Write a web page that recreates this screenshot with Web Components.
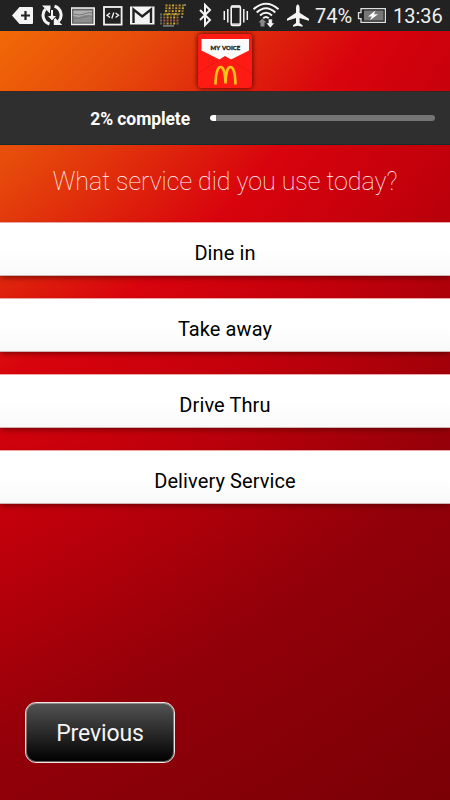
<!DOCTYPE html>
<html lang="en">
<head>
<meta charset="utf-8">
<title>My Voice</title>
<style>
  html, body {
    margin: 0;
    height: 100%;
  }

  body {
    font-family: Roboto, "Liberation Sans", sans-serif;
    overflow: hidden;
  }
</style>
</head>
<body>
<survey-app></survey-app>

<script>
// every icon is drawn in a box 30px high, one unit per pixel
const ICONS = {
  tag: [22, '<path fill="#f4f4f4" d="M0 15.500 7.500 7H20a1 1 0 0 1 1 1v15a1 1 0 0 1-1 1H7.500z"/><path stroke="#222" stroke-width="2.200" d="M9 15.500h9M13.500 11v9"/>'],
  sync: [23, '<g fill="none" stroke="#f4f4f4" stroke-width="3"><path d="M8.500 24A9.200 9.200 0 0 1 4.500 9M13.500 6.300A9.200 9.200 0 0 1 17.500 21.500"/></g><path fill="#f4f4f4" d="M1 5.500h8.500V14zM21.300 25h-8.500v-8.500z"/><path fill="#f4f4f4" stroke="#222" stroke-width="1" d="M9.500 9.500h3v6h3.500L11 21l-5-5.500h3.500z"/>'],
  screen: [24, '<rect x=".200" y="8" width="23" height="16.500" fill="#666" stroke="#f4f4f4" stroke-width="1.500"/><rect x="2.500" y="10" width="18.500" height="12.500" fill="#8d8d8d"/><path d="M2.500 11h18.500v5l-7-1-6 2-5.500-1z" fill="#b0b0b0"/><path fill="none" stroke="#777" d="M3 14q6 2 10 0t8-1M3 18q6 1 10-1t8-1"/>'],
  code: [20, '<rect x="1" y="7" width="17.600" height="17.600" fill="#222" stroke="#f4f4f4" stroke-width="1.800"/><path fill="none" stroke="#f4f4f4" stroke-width="1.300" d="m7 13-3 2.300 3 2.300M12.600 13l3 2.300-3 2.300M10.800 12.500l-2 6"/>'],
  mail: [25, '<path fill="#f4f4f4" d="M0 6.500h24.500v18H0z"/><path fill="none" stroke="#222" stroke-width="2.400" d="M3.500 23V9.500l8.700 7L21 9.500V23"/><path fill="#f4f4f4" d="M4 7h16.500l-8.300 7z"/>'],
  keys: [27, keyDots()],
  bluetooth: [14, '<path fill="none" stroke="#f4f4f4" stroke-width="2" d="m1 10 10 10-5 5V5l5 5L1 20"/>'],
  vibrate: [26, '<rect x="8.200" y="6" width="9.200" height="19.500" rx="1.500" fill="none" stroke="#f4f4f4" stroke-width="1.600"/><path stroke="#f4f4f4" stroke-width="2.400" d="M8.500 6.800h8.600M8.500 24.500h8.600" opacity=".8"/><path stroke="#f4f4f4" stroke-width="1.500" d="M4.800 9v13.500M20.800 9v13.500M1.300 11v9M24.300 11v9"/>'],
  wifi: [27, '<g fill="none" stroke="#f4f4f4" stroke-width="2"><path d="M.5 9.300q12.500-11 25 0M3.700 12.500q9.300-8.500 18.600 0M7 15.500q6-5.600 12 0"/><path d="M10.200 18.200q2.800-2.500 5.600 0"/></g><path fill="#888" d="M9.300 18.500 5.500 22.500h2v4h4v-4h2z"/><path fill="#f4f4f4" stroke="#222" stroke-width=".6" d="m17.300 28-4.300-5h2.300v-4h4v4h2.300z"/>'],
  plane: [23, '<path fill="#f4f4f4" d="M10.800 4.500c1.200 0 1.800 2 1.800 4v4.300l9.400 6v2l-9.400-2.800v5l3 2.200v1.600l-4.800-1-4.800 1v-1.600l3-2.200v-5L0 20.800v-2l9-6V8.500c0-2 .6-4 1.800-4z"/>'],
  battery: [29, '<path fill="none" stroke="#dedede" stroke-width="1.300" d="M4 8.600h24.400v13.800H4v-3.700H1.500v-6H4z"/><path fill="#777" d="M7 10.500h19.500v10H7z"/><path fill="#fff" d="m18.500 10.500-7.500 6h3.800L13 20.300l8-6h-4z"/>']
};

function keyDots() {
  const colors = ['#c99b26', '#a9832a', '#d8ae34', '#8b6d31'];
  let out = '';
  for (let row = 0; row < 4; row++) {
    for (let col = 0; col < 6; col++) {
      out += `<rect x="${5.500 + col * 3.3 - row * .2}" y="${4.500 + row * 2.800}" width="2" height="1.900" fill="${colors[(row + col) % 4]}"/>`;
    }
  }
  for (let row = 0; row < 4; row++) {
    for (let col = 0; col < 6; col++) {
      const fill = col === 0 ? '#686868' : row === 2 ? '#b0574d' : colors[(row * 2 + col) % 4];
      out += `<rect x="${col * 3.3}" y="${13.500 + row * 3}" width="2" height="2" fill="${fill}"/>`;
    }
  }
  return out + '<path fill="#777" d="M24 4h2v2h-2zM21 16h2v2h-2zM3 25h11v1.800H3z"/>';
}

class StatusIcon extends HTMLElement {
  constructor() {
    super();
    this.attachShadow({ mode: 'open' });
  }

  connectedCallback() {
    const [width, shapes] = ICONS[this.getAttribute('name')];
    this.shadowRoot.innerHTML = `
      <style>
        :host {
          display: block;
          height: 30px;
        }

        svg {
          display: block;
        }
      </style>
      <svg width="${width}" height="30" viewBox="0 0 ${width} 30">${shapes}</svg>
    `;
  }
}

class StatusBar extends HTMLElement {
  constructor() {
    super();
    this.attachShadow({ mode: 'open' });
    this.shadowRoot.innerHTML = `
      <style>
        :host {
          display: grid;
          grid-template-columns: 29px 30px 32px 27px 30px 39px 24px 30px 34px 28px 42px 36px 50px;
          height: 31px;
          box-sizing: border-box;
          padding-left: 12px;
          background: #222;
          border-bottom: 1px solid #1d2426;
          color: #f0f0f0;
          font-size: 20px;
          line-height: 33px;
          white-space: nowrap;
        }
      </style>
      <status-icon name="tag"></status-icon>
      <status-icon name="sync"></status-icon>
      <status-icon name="screen"></status-icon>
      <status-icon name="code"></status-icon>
      <status-icon name="mail"></status-icon>
      <status-icon name="keys"></status-icon>
      <status-icon name="bluetooth"></status-icon>
      <status-icon name="vibrate"></status-icon>
      <status-icon name="wifi"></status-icon>
      <status-icon name="plane"></status-icon>
      <span>74%</span>
      <status-icon name="battery"></status-icon>
      <span>13:36</span>
    `;
  }
}

class BrandHeader extends HTMLElement {
  constructor() {
    super();
    this.attachShadow({ mode: 'open' });
    this.shadowRoot.innerHTML = `
      <style>
        :host {
          display: flex;
          justify-content: center;
          height: 60px;
          box-sizing: border-box;
          padding-top: 3px;
        }

        svg {
          display: block;
          width: 54px;
          height: 54px;
          border-radius: 4px;
          box-shadow: 0 0 4px 1px rgba(70, 0, 0, 0.75);
        }

        text {
          font: 900 6px Lato, sans-serif;
          word-spacing: 1px;
        }
      </style>
      <svg viewBox="0 0 54 54">
        <path fill="#fd1b14" d="M0 0h54v54H0z"/>
        <path fill="none" stroke="#df1712" stroke-width=".7" d="M0 39.500 27 22l27 17.500"/>
        <path fill="#fafafa" d="M3.500 5h47.500v11.500L33 25.500l-6-3.500-5.500 3.500-18-9z"/>
        <text x="27.300" y="16.300" text-anchor="middle" fill="#252416" stroke="#252416" stroke-width=".3">MY VOICE</text>
        <path fill="none" stroke="#ffc414" stroke-width="2.600" d="M17.500 50.500C17.700 40 19.500 33 22.500 33S27.400 40 27.500 49.500C27.600 40 29.500 33 32.500 33S37.300 40 37.500 50.500"/>
      </svg>
    `;
  }
}

class SurveyProgress extends HTMLElement {
  constructor() {
    super();
    this.attachShadow({ mode: 'open' });
  }

  connectedCallback() {
    const value = this.getAttribute('value');
    this.shadowRoot.innerHTML = `
      <style>
        :host {
          display: grid;
          grid-template-columns: 190px 225px;
          column-gap: 20px;
          align-items: center;
          height: 54px;
          box-sizing: border-box;
          background: #2f2f2f;
          border-top: 1px solid #3a2724;
          border-bottom: 1px solid #162b2c;
          color: #fff;
        }

        .label {
          text-align: right;
          font-size: 17.5px;
          font-weight: 700;
          letter-spacing: -0.1px;
          line-height: 22px;
          padding-top: 1px;
        }

        .track {
          height: 6px;
          border-radius: 3px;
          background: #757575;
          overflow: hidden;
        }

        .fill {
          width: calc(${value}% + 1.5px);
          height: 100%;
          background: #fff;
          border-radius: 3px 0 0 3px;
        }
      </style>
      <div class="label">${value}% complete</div>
      <div class="track"><div class="fill"></div></div>
    `;
  }
}

class SurveyQuestion extends HTMLElement {
  constructor() {
    super();
    this.attachShadow({ mode: 'open' });
    this.shadowRoot.innerHTML = `
      <style>
        :host {
          display: flex;
          justify-content: center;
          height: 77px;
          box-sizing: border-box;
          padding-top: 21px;
          color: #fff;
          font-size: 25px;
          font-weight: 100;
          line-height: 32px;
          white-space: nowrap;
        }
      </style>
      <slot></slot>
    `;
  }
}

class SurveyOption extends HTMLElement {
  constructor() {
    super();
    this.attachShadow({ mode: 'open' });
    this.shadowRoot.innerHTML = `
      <style>
        :host {
          display: block;
        }

        button {
          display: block;
          width: 100%;
          height: 54px;
          padding: 7px 0 0;
          border: 0;
          border-top: 1px solid #eda4a4;
          border-bottom: 1px solid #d0b4b4;
          background: linear-gradient(#fff 50%, #f9f9f9);
          box-shadow: 0 3px 5px -1px rgba(60, 0, 0, 0.55);
          color: #000;
          font: inherit;
          font-size: 20px;
          letter-spacing: 0.1px;
          line-height: 24px;
        }
      </style>
      <button type="button"><slot></slot></button>
    `;
  }
}

class NavButton extends HTMLElement {
  constructor() {
    super();
    this.attachShadow({ mode: 'open' });
    this.shadowRoot.innerHTML = `
      <style>
        :host {
          display: block;
          width: 150px;
        }

        button {
          display: block;
          width: 100%;
          height: 61px;
          padding: 2px 0 0;
          border: 1px solid #f0e6e6;
          border-radius: 11px;
          background: linear-gradient(#535353, #000);
          box-shadow: inset 0 0 0 1px rgba(240, 230, 230, 0.4);
          color: #f4f4f4;
          font: inherit;
          font-size: 23px;
          letter-spacing: -0.1px;
        }
      </style>
      <button type="button"><slot></slot></button>
    `;
  }
}

class SurveyApp extends HTMLElement {
  constructor() {
    super();
    this.attachShadow({ mode: 'open' });
    this.shadowRoot.innerHTML = `
      <style>
        :host {
          display: flex;
          flex-direction: column;
          height: 100%;
          /* one wide circle centred far off the top left corner */
          background: radial-gradient(circle at -557px -581px, #f26a06 825px, #e64b0b 935px, #d8030d 1113px, #c0000b 1250px, #920009 1448px, #7a0006 1709px);
        }

        .options {
          display: flex;
          flex-direction: column;
          gap: 22px;
        }

        footer {
          margin-top: auto;
          padding: 0 25px 37px;
        }
      </style>
      <status-bar></status-bar>
      <brand-header></brand-header>
      <survey-progress value="2"></survey-progress>
      <survey-question>What service did you use today?</survey-question>
      <div class="options">
        <survey-option>Dine in</survey-option>
        <survey-option>Take away</survey-option>
        <survey-option>Drive Thru</survey-option>
        <survey-option>Delivery Service</survey-option>
      </div>
      <footer><nav-button>Previous</nav-button></footer>
    `;
  }
}

customElements.define('status-icon', StatusIcon);
customElements.define('status-bar', StatusBar);
customElements.define('brand-header', BrandHeader);
customElements.define('survey-progress', SurveyProgress);
customElements.define('survey-question', SurveyQuestion);
customElements.define('survey-option', SurveyOption);
customElements.define('nav-button', NavButton);
customElements.define('survey-app', SurveyApp);
</script>
</body>
</html>
